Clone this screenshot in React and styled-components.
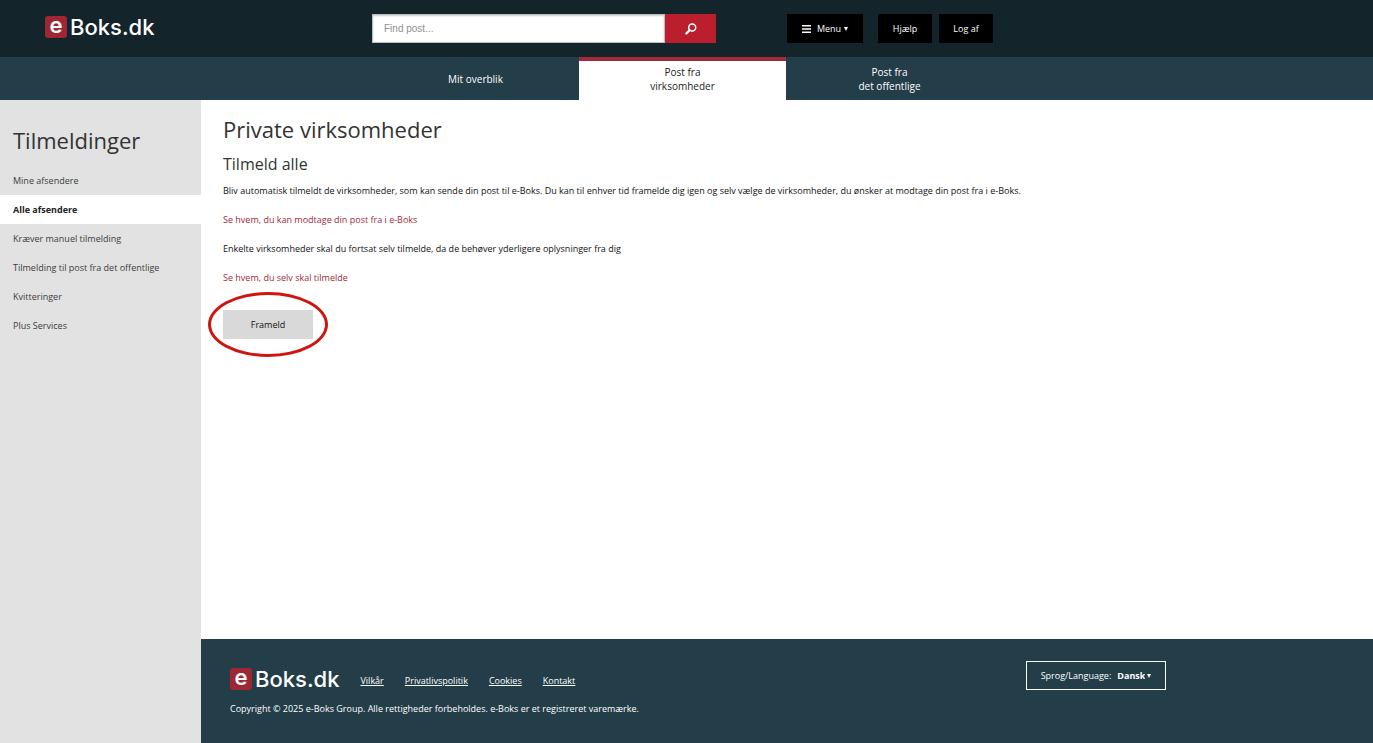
import React, { useState } from 'react';
import styled, { createGlobalStyle } from 'styled-components';

const GlobalStyle = createGlobalStyle`
  * {
    box-sizing: border-box;
  }

  body {
    margin: 0;
    background: #fff;
    color: #111;
    font-family: 'Open Sans', 'Noto Sans', sans-serif;
    font-size: 9px;
    line-height: 14px;
  }

  button,
  input,
  select {
    font: inherit;
    margin: 0;
  }
`;

const Page = styled.div`
  display: flex;
  flex-direction: column;
  min-height: 100vh;
`;

const StyledHeader = styled.header`
  display: grid;
  grid-template-columns: 1fr minmax(0, 621px) 1fr;
  align-items: center;
  height: 57px;
  padding: 0 8px 0 0;
  background: #14242b;
`;

const LogoLink = styled.a`
  display: flex;
  align-items: center;
  gap: 3px;
  margin-left: ${({ $inset }) => ($inset ? '45px' : '0')};
  padding-bottom: ${({ $inset }) => ($inset ? '4px' : '0')};
  color: #fff;
  font-family: Inter, sans-serif;
  font-size: 22px;
  font-weight: 500;
  line-height: 24px;
  text-decoration: none;
`;

const LogoBadge = styled.span`
  display: flex;
  align-items: center;
  justify-content: center;
  width: 22px;
  height: 22px;
  padding-bottom: 4px;
  border-radius: 3px;
  background: #9e2733;
  font-weight: 600;
`;

const HeaderTools = styled.div`
  display: flex;
  align-items: center;
  justify-content: space-between;
`;

const SearchForm = styled.form`
  display: flex;
  width: 344px;
  height: 29px;
`;

const SearchInput = styled.input`
  flex: 1;
  min-width: 0;
  padding: 0 11px;
  border: 1px solid #b8bec1;
  border-radius: 0;
  background: #fff;
  box-shadow: inset 0 1px 2px rgba(0, 0, 0, 0.2);
  font-family: 'Liberation Sans', Arial, sans-serif;
  font-size: 10px;
  outline: none;

  &::placeholder {
    color: #8f8f8f;
    opacity: 1;
  }
`;

const SearchButton = styled.button`
  display: flex;
  align-items: center;
  justify-content: center;
  width: 51px;
  padding: 0;
  border: 0;
  background: #bb1f2d;
  cursor: pointer;
`;

const HeaderButtons = styled.div`
  display: flex;
  gap: 7px;
`;

const HeaderButton = styled.button`
  display: flex;
  align-items: center;
  justify-content: center;
  gap: 5px;
  width: ${({ $wide }) => ($wide ? '76px' : '54px')};
  height: 29px;
  margin-right: ${({ $wide }) => ($wide ? '8px' : '0')};
  padding: 0;
  border: 0;
  background: #000;
  color: #fff;
  cursor: pointer;
`;

const ButtonText = styled.span`
  display: flex;
  align-items: center;
  gap: 3px;
`;

const TabBar = styled.nav`
  display: flex;
  justify-content: center;
  height: 43px;
  padding-right: 8px;
  background: #233d49;
`;

const TabLink = styled.a`
  display: flex;
  align-items: center;
  justify-content: center;
  width: 207px;
  padding-bottom: 3px;
  border-top: 4px solid ${({ $active }) => ($active ? '#a32a38' : 'transparent')};
  background: ${({ $active }) => ($active ? '#fff' : 'transparent')};
  color: ${({ $active }) => ($active ? '#222' : '#fff')};
  font-size: 10px;
  text-align: center;
  text-decoration: none;
  white-space: pre-line;
`;

const Body = styled.div`
  display: flex;
  flex: 1;
`;

const Sidebar = styled.aside`
  flex: 0 0 201px;
  padding-top: 25px;
  background: #e2e2e2;
`;

const SidebarTitle = styled.h2`
  margin: 0 0 11px;
  padding-left: 13px;
  color: #333;
  font-size: 22px;
  font-weight: 400;
  line-height: 30px;
`;

const SidebarList = styled.ul`
  margin: 0;
  padding: 0;
  list-style: none;
`;

const SidebarLink = styled.a`
  display: block;
  height: 29px;
  padding-left: 13px;
  background: ${({ $active }) => ($active ? '#fff' : 'transparent')};
  color: ${({ $active }) => ($active ? '#222' : '#3d3d3d')};
  font-weight: ${({ $active }) => ($active ? 700 : 400)};
  line-height: 29px;
  text-decoration: none;
`;

const Main = styled.div`
  display: flex;
  flex: 1;
  flex-direction: column;
  min-width: 0;
`;

const Content = styled.main`
  flex: 1;
  padding: 14px 22px;
`;

const Title = styled.h1`
  margin: 0;
  color: #333;
  font-size: 22px;
  font-weight: 400;
  line-height: 30px;
`;

const Subtitle = styled.h2`
  margin: 8px 0 0;
  color: #333;
  font-size: 16px;
  font-weight: 400;
  line-height: 24px;
`;

const Paragraph = styled.p`
  margin: 0;
  line-height: 29px;
`;

const RedLink = styled.a`
  color: #a32a38;
  text-decoration: none;
`;

const ActionArea = styled.div`
  position: relative;
  width: 90px;
  margin-top: 18px;
`;

const ActionButton = styled.button`
  width: 100%;
  height: 29px;
  padding: 0;
  border: 0;
  background: #d9d9d9;
  color: #111;
  cursor: pointer;
`;

const Highlight = styled.span`
  position: absolute;
  inset: -18px -15px;
  border: 3px solid #d0150f;
  border-radius: 50%;
  pointer-events: none;
`;

const StyledFooter = styled.footer`
  display: flex;
  justify-content: space-between;
  height: 104px;
  padding: 22px 207px 0 29px;
  background: #233d49;
  color: #fff;
`;

const FooterLinks = styled.div`
  display: flex;
  align-items: center;
  gap: 21px;
  margin-top: 6px;
`;

const FooterLink = styled.a`
  padding-top: 3px;
  color: #fff;
  text-decoration: underline;
`;

const Copyright = styled.p`
  margin: 11px 0 0;
`;

const LanguageBox = styled.label`
  display: flex;
  align-items: center;
  justify-content: center;
  width: 140px;
  height: 29px;
  border: 1px solid #fff;
`;

const LanguageSelect = styled.select`
  appearance: none;
  field-sizing: content;
  margin-left: 6px;
  margin-right: 2px;
  padding: 0;
  border: 0;
  background: transparent;
  color: #fff;
  font-weight: 700;

  option {
    color: #111;
  }
`;

const tabs = [
  { label: 'Mit overblik' },
  { label: 'Post fra\nvirksomheder', active: true },
  { label: 'Post fra\ndet offentlige' },
];

const sidebarItems = [
  'Mine afsendere',
  'Alle afsendere',
  'Kræver manuel tilmelding',
  'Tilmelding til post fra det offentlige',
  'Kvitteringer',
  'Plus Services',
];

const footerLinks = ['Vilkår', 'Privatlivspolitik', 'Cookies', 'Kontakt'];

const Logo = ({ inset }) => (
  <LogoLink href="#" $inset={inset}>
    <LogoBadge>e</LogoBadge>
    Boks.dk
  </LogoLink>
);

const SearchIcon = () => (
  <svg width="12" height="12" viewBox="0 0 12 12" fill="none" stroke="#fff" aria-hidden="true">
    <circle cx="7.2" cy="4.6" r="3.5" strokeWidth="1.5" />
    <path d="M4.6 7.2L1.4 10.4" strokeWidth="2.2" strokeLinecap="round" />
  </svg>
);

const MenuIcon = () => (
  <svg width="10" height="8" viewBox="0 0 10 8" fill="#fff" aria-hidden="true">
    <path d="M0 0h9v1.6H0zM0 3.2h9v1.6H0zM0 6.4h9v1.6H0z" />
  </svg>
);

const Caret = () => (
  <svg width="4" height="4" viewBox="0 0 4 4" fill="#fff" aria-hidden="true">
    <path d="M0 0h4L2 4z" />
  </svg>
);

export default function App() {
  const [activeItem, setActiveItem] = useState('Alle afsendere');
  const [language, setLanguage] = useState('Dansk');

  return (
    <Page>
      <GlobalStyle />
      <StyledHeader>
        <Logo inset />
        <HeaderTools>
          <SearchForm role="search" onSubmit={(e) => e.preventDefault()}>
            <SearchInput type="text" placeholder="Find post..." aria-label="Find post" />
            <SearchButton type="submit" aria-label="Søg">
              <SearchIcon />
            </SearchButton>
          </SearchForm>
          <HeaderButtons>
            <HeaderButton type="button" $wide>
              <MenuIcon />
              <ButtonText>
                Menu <Caret />
              </ButtonText>
            </HeaderButton>
            <HeaderButton type="button">Hjælp</HeaderButton>
            <HeaderButton type="button">Log af</HeaderButton>
          </HeaderButtons>
        </HeaderTools>
      </StyledHeader>
      <TabBar>
        {tabs.map(({ label, active }) => (
          <TabLink key={label} href="#" $active={active}>
            {label}
          </TabLink>
        ))}
      </TabBar>
      <Body>
        <Sidebar>
          <SidebarTitle>Tilmeldinger</SidebarTitle>
          <SidebarList>
            {sidebarItems.map((item) => (
              <li key={item}>
                <SidebarLink
                  href="#"
                  $active={item === activeItem}
                  onClick={() => setActiveItem(item)}
                >
                  {item}
                </SidebarLink>
              </li>
            ))}
          </SidebarList>
        </Sidebar>
        <Main>
          <Content>
            <Title>Private virksomheder</Title>
            <Subtitle>Tilmeld alle</Subtitle>
            <Paragraph>
              Bliv automatisk tilmeldt de virksomheder, som kan sende din post til e-Boks. Du kan
              til enhver tid framelde dig igen og selv vælge de virksomheder, du ønsker at modtage
              din post fra i e-Boks.
            </Paragraph>
            <Paragraph>
              <RedLink href="#">Se hvem, du kan modtage din post fra i e-Boks</RedLink>
            </Paragraph>
            <Paragraph>
              Enkelte virksomheder skal du fortsat selv tilmelde, da de behøver yderligere
              oplysninger fra dig
            </Paragraph>
            <Paragraph>
              <RedLink href="#">Se hvem, du selv skal tilmelde</RedLink>
            </Paragraph>
            <ActionArea>
              <ActionButton type="button">Frameld</ActionButton>
              <Highlight />
            </ActionArea>
          </Content>
          <StyledFooter>
            <div>
              <FooterLinks>
                <Logo />
                {footerLinks.map((link) => (
                  <FooterLink key={link} href="#">
                    {link}
                  </FooterLink>
                ))}
              </FooterLinks>
              <Copyright>
                Copyright © 2025 e-Boks Group. Alle rettigheder forbeholdes. e-Boks er et
                registreret varemærke.
              </Copyright>
            </div>
            <LanguageBox>
              Sprog/Language:
              <LanguageSelect value={language} onChange={(e) => setLanguage(e.target.value)}>
                <option>Dansk</option>
                <option>English</option>
              </LanguageSelect>
              <Caret />
            </LanguageBox>
          </StyledFooter>
        </Main>
      </Body>
    </Page>
  );
}
